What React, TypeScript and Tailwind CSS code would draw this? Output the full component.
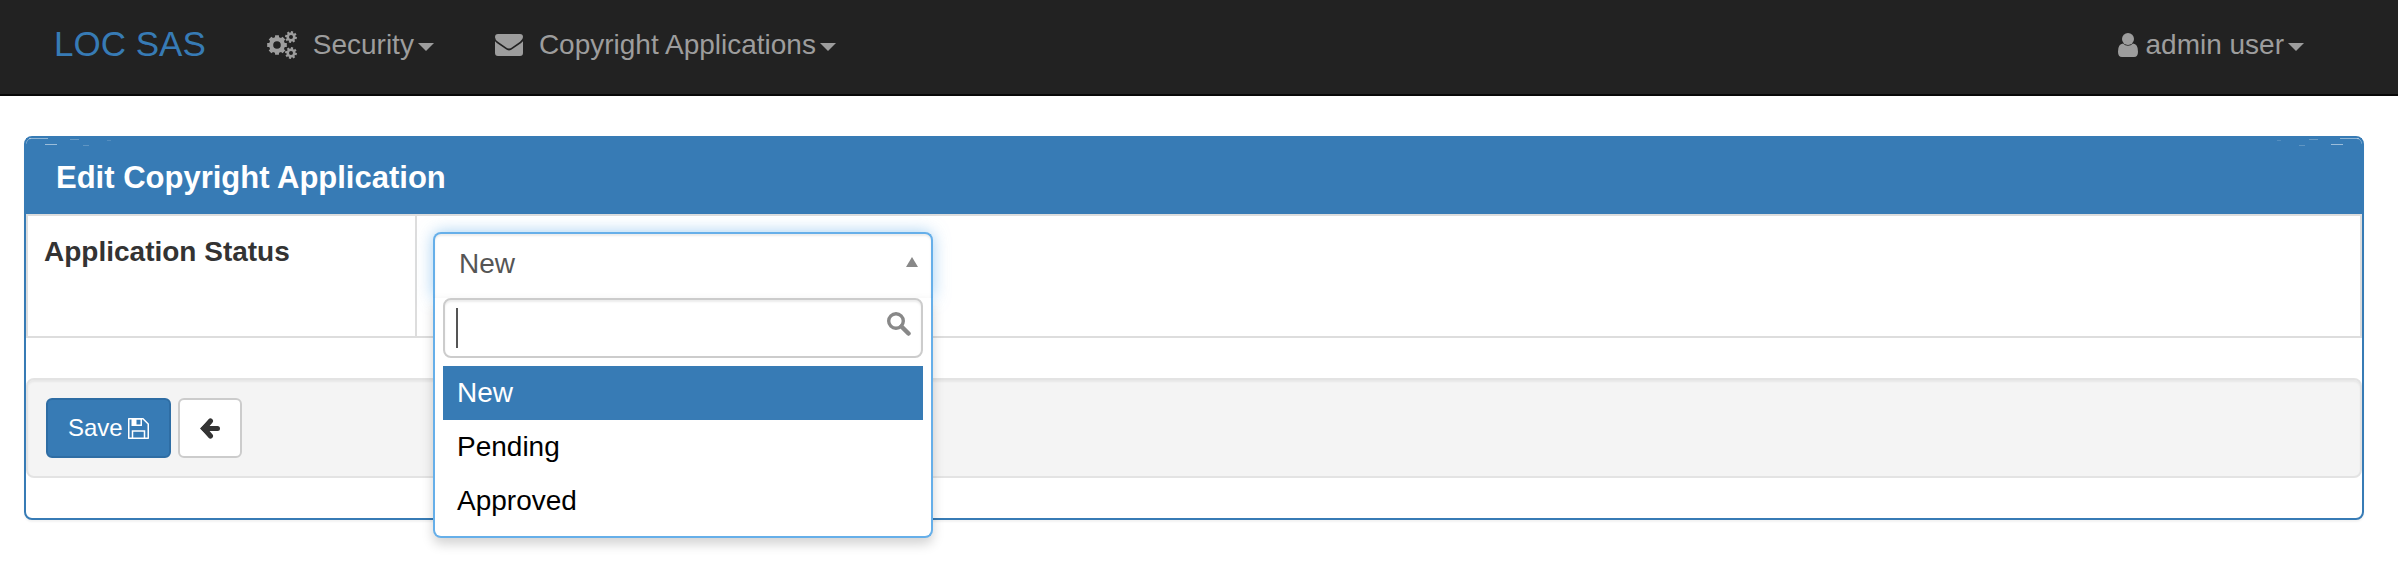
import { useState } from "react";

const FONT = "font-['Liberation_Sans',Arial,sans-serif]";

function gear(cx: number, cy: number, outer: number, root: number, hole: number, turn: number) {
  const teeth = 8;
  const step = (Math.PI * 2) / teeth;
  const at = (r: number, a: number) =>
    `${(cx + r * Math.cos(a)).toFixed(2)} ${(cy + r * Math.sin(a)).toFixed(2)}`;
  const points: string[] = [];
  for (let i = 0; i < teeth; i++) {
    const a = i * step + turn;
    points.push(at(root, a - 0.26), at(outer, a - 0.19), at(outer, a + 0.19), at(root, a + 0.26));
  }
  return (
    `M${points.join("L")}Z` +
    `M${cx - hole} ${cy}a${hole} ${hole} 0 1 0 ${hole * 2} 0a${hole} ${hole} 0 1 0 ${-hole * 2} 0Z`
  );
}

function CogsIcon() {
  return (
    <svg aria-hidden="true" viewBox="0 0 30 28" className="h-7 w-[30px] fill-current">
      <path fillRule="evenodd" d={gear(10, 14, 10, 8, 3.8, 0)} />
      <path fillRule="evenodd" d={gear(24, 6, 6, 4.5, 2, 0.2)} />
      <path fillRule="evenodd" d={gear(24, 22, 6, 4.5, 2, 0.2)} />
    </svg>
  );
}

function EnvelopeIcon() {
  return (
    <svg aria-hidden="true" viewBox="0 0 28 22" className="h-[22px] w-7 fill-current">
      <path d="M0 3.2Q0 0 3 0H25Q28 0 28 3Q28 5.6 25 7.8L17.5 13Q15.5 14.5 14 14.5T10.5 13L3 7.8Q0 5.5 0 3.2Z" />
      <path d="M0 7.3Q.8 8.2 1.8 8.9L9.5 14.2Q12.5 16.5 14 16.5T18.5 14.2L26.2 8.9Q27.2 8.2 28 7.3V19Q28 22 25 22H3Q0 22 0 19Z" />
    </svg>
  );
}

function UserIcon() {
  return (
    <svg aria-hidden="true" viewBox="0 0 20 24" className="h-6 w-5 fill-current">
      <circle cx="10" cy="6" r="6" />
      <path d="M5 10.5Q7.2 12.7 10 12.7T15 10.5Q20 10.8 20 18.8Q20 24 16 24H4Q0 24 0 18.8Q0 10.8 5 10.5Z" />
    </svg>
  );
}

function FloppyIcon() {
  return (
    <svg aria-hidden="true" viewBox="0 0 21 21" className="h-[21px] w-[21px]">
      <path d="M.75 .75H15L20.25 6V20.25H.75Z" fill="none" stroke="currentColor" strokeWidth="1.5" strokeLinejoin="round" />
      <path fillRule="evenodd" fill="currentColor" d="M3.5 .5H14V8H3.5ZM8.5 1.5V6.5H12.5V1.5Z" />
      <path d="M4.5 20V13H16.5V20" fill="none" stroke="currentColor" strokeWidth="1.5" />
    </svg>
  );
}

function ArrowLeftIcon() {
  return (
    <svg aria-hidden="true" viewBox="0 0 20 21" className="h-[21px] w-5">
      <path d="M10.5 3L4 10.5L10.5 18M4 10.5H17.5" fill="none" stroke="currentColor" strokeWidth="5" strokeLinecap="round" />
      <path d="M0 10.5L9 1.5V19.5Z" fill="currentColor" />
    </svg>
  );
}

function SearchIcon() {
  return (
    <svg aria-hidden="true" viewBox="0 0 24 24" className="h-6 w-6">
      <circle cx="9" cy="9" r="7.3" fill="none" stroke="currentColor" strokeWidth="3.4" />
      <path d="M14.5 14.5L21.5 21.5" stroke="currentColor" strokeWidth="4.5" strokeLinecap="round" />
    </svg>
  );
}

function Caret() {
  return <span className="mt-1 border-x-8 border-t-8 border-x-transparent border-t-current" />;
}

function HeaderGlint({ className }: { className: string }) {
  return (
    <svg aria-hidden="true" viewBox="0 0 90 10" className={`absolute top-0 h-[10px] w-[90px] ${className}`}>
      <g fill="none" stroke="#fff">
        <path d="M0 6Q1 1 5 .5" opacity=".3" />
        <path d="M3 .5H22" opacity=".45" />
        <path d="M19 6.5H31" opacity=".5" />
        <path d="M44 1.5H53" opacity=".25" />
        <path d="M57 7.5H63" opacity=".2" />
        <path d="M81 2.5H85" opacity=".15" />
      </g>
    </svg>
  );
}

const OPTIONS = ["New", "Pending", "Approved"];

export default function App() {
  const [status, setStatus] = useState("New");

  return (
    <div className={`${FONT} bg-white text-[28px] leading-10 text-[#333]`}>
      <nav className="flex h-24 items-center border-b-2 border-[#080808] bg-[#222] pr-[94px] pl-[54px] text-[#9d9d9d]">
        <a href="#" className="pb-[6px] text-[35px] leading-10 text-[#377bb5]">LOC SAS</a>
        <button type="button" className="ml-[61px] flex items-center pb-1">
          <CogsIcon />
          <span className="ml-4 mr-1">Security</span>
          <Caret />
        </button>
        <button type="button" className="ml-[61px] flex items-center pb-1">
          <EnvelopeIcon />
          <span className="ml-4 mr-1">Copyright Applications</span>
          <Caret />
        </button>
        <button type="button" className="ml-auto flex items-center pb-1">
          <UserIcon />
          <span className="ml-[7px] mr-1">admin user</span>
          <Caret />
        </button>
      </nav>

      <main className="pt-10 pr-[34px] pb-[68px] pl-6">
        <section className="rounded-lg border-2 border-[#377bb5] bg-white pb-10 shadow-[0_2px_2px_rgba(0,0,0,0.05)]">
          <header className="relative bg-[#377bb5] px-[30px] pt-5 pb-4">
            <HeaderGlint className="left-0" />
            <HeaderGlint className="right-0 -scale-x-100" />
            <h1 className="text-[31px] leading-10 font-bold text-white">Edit Copyright Application</h1>
          </header>

          <table className="mb-10 w-full table-fixed border-collapse border-2 border-[#ddd]">
            <tbody>
              <tr>
                <th scope="row" className="w-[389px] border-2 border-[#ddd] p-4 text-left align-top font-bold">
                  <label htmlFor="status-search">Application Status</label>
                </th>
                <td className="border-2 border-[#ddd] p-4 align-top">
                  <div className="relative mb-[22px] w-[500px]">
                    <button
                      type="button"
                      aria-expanded="true"
                      className="flex h-[66px] w-full items-center justify-between rounded-t-lg border-2 border-b-0 border-[#66afe9] bg-white pr-[13px] pb-1 pl-6 text-[#555] shadow-[inset_0_2px_2px_rgba(0,0,0,0.075),0_0_16px_rgba(102,175,233,0.6)]"
                    >
                      {status}
                      <span className="mb-1 border-x-[6px] border-b-[10px] border-x-transparent border-b-[#888]" />
                    </button>
                    <div className="absolute inset-x-0 top-full z-10 rounded-b-lg border-2 border-t-0 border-[#66afe9] bg-white px-2 pb-2 shadow-[0_6px_12px_rgba(0,0,0,0.175)]">
                      <div className="relative">
                        <input
                          id="status-search"
                          type="text"
                          autoComplete="off"
                          className="block h-[60px] w-full rounded-lg border-2 border-[#ccc] bg-white pr-12 pl-3 shadow-[inset_0_2px_2px_rgba(0,0,0,0.075)] outline-none"
                        />
                        <span aria-hidden="true" className="absolute top-[10px] left-[13px] h-10 w-[2px] bg-[#555]" />
                        <span className="absolute top-[14px] right-3 text-[#888]">
                          <SearchIcon />
                        </span>
                      </div>
                      <ul role="listbox" aria-label="Application Status" className="mt-2">
                        {OPTIONS.map((option) => (
                          <li
                            key={option}
                            role="option"
                            aria-selected={option === status}
                            onClick={() => setStatus(option)}
                            className={
                              option === status
                                ? "h-[54px] cursor-pointer bg-[#377bb5] px-[14px] py-[7px] text-white"
                                : "h-[54px] cursor-pointer px-[14px] py-[7px] text-black"
                            }
                          >
                            {option}
                          </li>
                        ))}
                      </ul>
                    </div>
                  </div>
                </td>
              </tr>
            </tbody>
          </table>

          <div className="flex gap-[7px] rounded-lg border-2 border-[#e3e3e3] bg-[#f4f4f4] p-[18px] shadow-[inset_0_2px_2px_rgba(0,0,0,0.05)]">
            <button type="submit" className="flex h-[60px] items-center gap-[5px] rounded-md border-2 border-[#2e6da4] bg-[#377bb5] px-5 text-2xl text-white">
              Save
              <FloppyIcon />
            </button>
            <button type="button" aria-label="Back" className="flex h-[60px] items-center rounded-md border-2 border-[#ccc] bg-white px-5 text-[#333]">
              <ArrowLeftIcon />
            </button>
          </div>
        </section>
      </main>
    </div>
  );
}
